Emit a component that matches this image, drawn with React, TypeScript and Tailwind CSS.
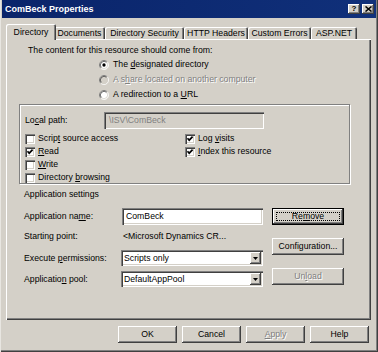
import type { ReactNode } from "react";

const raised =
  "shadow-[inset_-1px_-1px_0_#404040,inset_1px_1px_0_#fff,inset_-2px_-2px_0_#808080]";
const sunken =
  "shadow-[inset_1px_1px_0_#808080,inset_2px_2px_0_#404040,inset_-1px_-1px_0_#fff,inset_-2px_-2px_0_#d4d0c8]";
const grayText = "text-[#808080] [text-shadow:1px_1px_0_#fff]";

function K({ children }: { children: ReactNode }) {
  return <span className="underline decoration-1 underline-offset-[1px]">{children}</span>;
}

function Radio({ checked, disabled, children }: { checked?: boolean; disabled?: boolean; children: ReactNode }) {
  return (
    <div className="flex h-[15px] items-center gap-[4px]">
      <svg width="10" height="10" viewBox="0 0 12 12" className="shrink-0">
        <circle cx="6" cy="6" r="5" fill={disabled ? "#d4d0c8" : "#fff"} />
        <path d="M2.11 9.89 A5.5 5.5 0 0 1 9.89 2.11" fill="none" stroke="#808080" />
        <path d="M9.89 2.11 A5.5 5.5 0 0 1 2.11 9.89" fill="none" stroke="#fff" />
        <path d="M2.82 9.18 A4.5 4.5 0 0 1 9.18 2.82" fill="none" stroke="#404040" />
        <path d="M9.18 2.82 A4.5 4.5 0 0 1 2.82 9.18" fill="none" stroke="#d4d0c8" />
        {checked && <circle cx="6" cy="6" r="2" fill="#000" />}
      </svg>
      <span className={disabled ? grayText : ""}>{children}</span>
    </div>
  );
}

function Check({ checked, children }: { checked?: boolean; children: ReactNode }) {
  return (
    <div className="flex h-[13px] items-center gap-[3px]">
      <span className={`w-[10px] h-[10px] shrink-0 bg-white ${sunken}`}>
        {checked && (
          <svg width="10" height="10" viewBox="0 0 10 10">
            <polyline points="2.5,4.3 4.2,6.2 7.6,2.6" fill="none" stroke="#000" strokeWidth="1.7" />
          </svg>
        )}
      </span>
      <span>{children}</span>
    </div>
  );
}

function Select({ value }: { value: string }) {
  return (
    <div className={`flex h-[16px] w-[142px] items-center bg-white p-[2px] ${sunken}`}>
      <span className="flex-1 pl-[1px]">{value}</span>
      <span className={`flex h-full w-[11px] items-center justify-center bg-[#d4d0c8] ${raised}`}>
        <svg width="5" height="3" viewBox="0 0 5 3">
          <polygon points="0,0 5,0 2.5,3" fill="#000" />
        </svg>
      </span>
    </div>
  );
}

export default function App() {
  return (
    <div className="flex h-[352px] w-[378px] flex-col bg-[#d4d0c8] px-[3px] pb-[3px] font-['Liberation_Sans',Arial,sans-serif] text-[8.7px] leading-[11px] text-black shadow-[inset_1px_0_0_#e8e6e1,inset_-1px_-1px_0_#404040,inset_-2px_-2px_0_#808080]">
      {/* TITLE BAR */}
      <div className="-mx-[1px] flex h-[18px] items-center justify-between bg-gradient-to-r from-[#0a246a] to-[#10307a] pl-[3px] pr-[2px]">
        <span className="text-[9px] font-bold text-white">ComBeck Properties</span>
        <div className="flex gap-[2px]">
          <span className={`flex h-[10px] w-[12px] items-center justify-center bg-[#d4d0c8] text-[8px] font-bold leading-none ${raised}`}>
            ?
          </span>
          <span className={`flex h-[10px] w-[12px] items-center justify-center bg-[#d4d0c8] ${raised}`}>
            <svg width="7" height="6" viewBox="0 0 7 6">
              <path d="M0.5 0.5 L6.5 5.5 M6.5 0.5 L0.5 5.5" stroke="#000" strokeWidth="1.5" />
            </svg>
          </span>
        </div>
      </div>

      {/* TABS */}
      <div className="mt-[6px] flex h-[15px] items-end pl-[5px]">
        <div className="relative z-10 -mx-[2px] -mb-[1px] flex h-[16px] w-[50px] items-start justify-center rounded-t-[2px] bg-[#d4d0c8] pt-[3px] shadow-[inset_1px_1px_0_#fff,inset_-1px_0_0_#404040,inset_-2px_0_0_#808080]">
          Directory
        </div>
        {[
          ["Documents", "w-[51px]"],
          ["Directory Security", "w-[79px]"],
          ["HTTP Headers", "w-[64px]"],
          ["Custom Errors", "w-[63px]"],
          ["ASP.NET", "w-[46px]"],
        ].map(([t, w]) => (
          <div
            key={t}
            className={`flex h-[12px] items-center justify-center rounded-t-[2px] shadow-[inset_1px_1px_0_#fff,inset_-1px_0_0_#404040,inset_-2px_0_0_#808080] ${w}`}
          >
            {t}
          </div>
        ))}
      </div>

      {/* PANEL */}
      <div className="ml-[3px] flex h-[281px] w-[365px] flex-col shadow-[inset_1px_1px_0_#fff,inset_-1px_-1px_0_#404040,inset_-2px_-2px_0_#808080]">
        <div className="ml-[22px] mt-[5px] flex h-[12px] items-center">
          The content for this resource should come from:
        </div>

        <div className="ml-[93px] mt-[1px] flex flex-col">
          <Radio checked>
            The <K>d</K>esignated directory
          </Radio>
          <Radio disabled>
            A s<K>h</K>are located on another computer
          </Radio>
          <Radio>
            A redirection to a <K>U</K>RL
          </Radio>
        </div>

        {/* GROUP */}
        <div className="ml-[13px] mt-[2px] flex h-[80px] w-[331px] flex-col border border-[#808080] pl-[5px] pt-[7px] shadow-[inset_1px_1px_0_#fff,1px_1px_0_#fff]">
          <div className="flex h-[17px] items-center">
            <span className="w-[79px]">
              Lo<K>c</K>al path:
            </span>
            <div className={`flex h-[17px] w-[160px] items-center bg-[#d4d0c8] pl-[5px] ${sunken}`}>
              <span className="text-[#808080]">\ISV\ComBeck</span>
            </div>
          </div>
          <div className="mt-[3px] grid grid-cols-[160px_1fr]">
            <div className="flex flex-col">
              <Check>
                Scrip<K>t</K> source access
              </Check>
              <Check checked>
                <K>R</K>ead
              </Check>
              <Check>
                <K>W</K>rite
              </Check>
              <Check>
                Directory <K>b</K>rowsing
              </Check>
            </div>
            <div className="flex flex-col">
              <Check checked>
                Log <K>v</K>isits
              </Check>
              <Check checked>
                <K>I</K>ndex this resource
              </Check>
            </div>
          </div>
        </div>

        <div className="ml-[18px] mt-[4px] flex h-[12px] items-center">Application settings</div>

        {/* APPLICATION SETTINGS */}
        <div className="ml-[18px] mt-[8px] flex gap-[9px]">
          <div className="flex w-[239px] flex-col">
            <div className="flex h-[17px] items-center">
              <span className="w-[98px]">
                Application na<K>m</K>e:
              </span>
              <div className={`flex h-[17px] w-[141px] items-center bg-white pl-[4px] ${sunken}`}>ComBeck</div>
            </div>
            <div className="flex h-[22px] items-center">
              <span className="w-[99px]">Starting point:</span>
              <span>{"<Microsoft Dynamics CR..."}</span>
            </div>
            <div className="mt-[3px] flex items-center">
              <span className="w-[97px]">
                Execute <K>p</K>ermissions:
              </span>
              <Select value="Scripts only" />
            </div>
            <div className="mt-[5px] flex items-center">
              <span className="w-[97px]">
                Applicatio<K>n</K> pool:
              </span>
              <Select value="DefaultAppPool" />
            </div>
          </div>

          <div className="flex w-[72px] flex-col">
            <div className={`flex h-[17px] items-center justify-center border border-black p-[3px] ${raised}`}>
              <span className="flex h-full w-full items-center justify-center border border-dotted border-black">
                Re<K>m</K>ove
              </span>
            </div>
            <div className={`mt-[13px] flex h-[17px] items-center justify-center ${raised}`}>Configuration...</div>
            <div className={`mt-[13px] flex h-[17px] items-center justify-center ${raised} ${grayText}`}>
              Un<K>l</K>oad
            </div>
          </div>
        </div>
      </div>

      {/* FOOTER BUTTONS */}
      <div className="mt-[6px] flex h-[17px] justify-end gap-[5px] pr-[6px]">
        <div className={`flex w-[59px] items-center justify-center ${raised}`}>OK</div>
        <div className={`flex w-[59px] items-center justify-center ${raised}`}>Cancel</div>
        <div className={`flex w-[59px] items-center justify-center ${raised} ${grayText}`}>
          <K>A</K>pply
        </div>
        <div className={`flex w-[59px] items-center justify-center ${raised}`}>Help</div>
      </div>
    </div>
  );
}
